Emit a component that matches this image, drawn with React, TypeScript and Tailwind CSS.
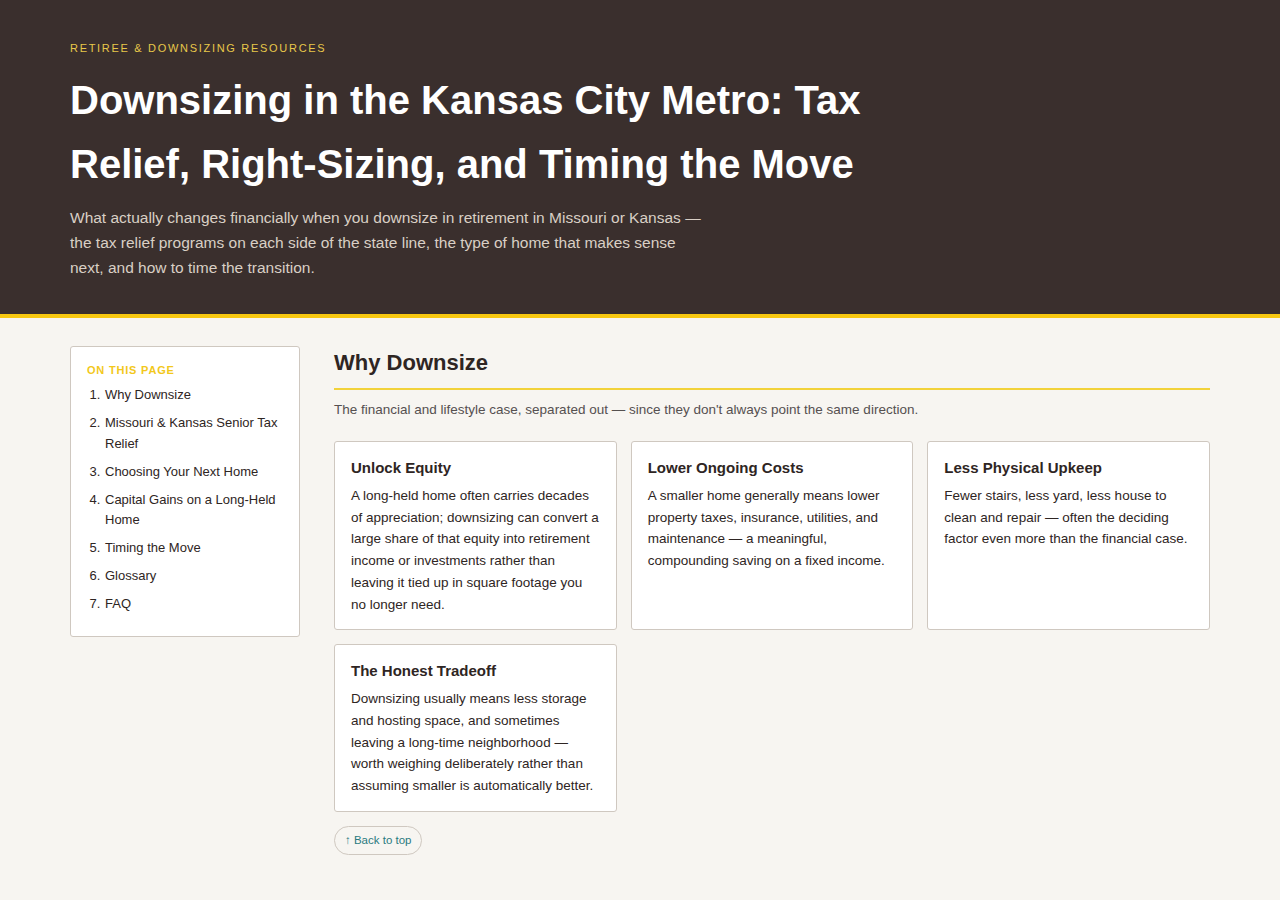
import React from 'react';

const toc = [
  'Why Downsize',
  'Missouri & Kansas Senior Tax Relief',
  'Choosing Your Next Home',
  'Capital Gains on a Long-Held Home',
  'Timing the Move',
  'Glossary',
  'FAQ',
];

const cards = [
  {
    title: 'Unlock Equity',
    body: 'A long-held home often carries decades of appreciation; downsizing can convert a large share of that equity into retirement income or investments rather than leaving it tied up in square footage you no longer need.',
  },
  {
    title: 'Lower Ongoing Costs',
    body: 'A smaller home generally means lower property taxes, insurance, utilities, and maintenance — a meaningful, compounding saving on a fixed income.',
  },
  {
    title: 'Less Physical Upkeep',
    body: 'Fewer stairs, less yard, less house to clean and repair — often the deciding factor even more than the financial case.',
  },
  {
    title: 'The Honest Tradeoff',
    body: 'Downsizing usually means less storage and hosting space, and sometimes leaving a long-time neighborhood — worth weighing deliberately rather than assuming smaller is automatically better.',
  },
];

export default function App() {
  return (
    <div className="min-h-[900px] bg-[#f7f5f1] font-['Liberation_Sans',Arial,sans-serif] text-[#2e2523]">
      <header className="bg-[#3a2f2d] border-b-4 border-[#f7c811]">
        <div className="px-[70px] pt-[41px] pb-[34px]">
          <p className="text-[11px] tracking-[1.7px] uppercase text-[#e8c84a] leading-[14px]">
            Retiree &amp; Downsizing Resources
          </p>
          <h1 className="mt-[13px] text-[40px] font-bold leading-[64px] text-white max-w-[830px]">
            Downsizing in the Kansas City Metro: Tax Relief, Right-Sizing, and Timing the Move
          </h1>
          <p className="mt-[9px] text-[15.5px] leading-[25px] text-[#d9cfc5] max-w-[640px]">
            What actually changes financially when you downsize in retirement in Missouri or Kansas — the tax relief programs on each side of the state line, the type of home that makes sense next, and how to time the transition.
          </p>
        </div>
      </header>

      <div className="px-[70px] pt-[28px] pb-[44px] flex gap-[34px] items-start">
        <aside className="w-[230px] shrink-0 bg-white border border-[#cfc8c0] rounded-[3px] px-[16px] pt-[16px] pb-[14px]">
          <p className="text-[11px] font-bold tracking-[0.8px] uppercase text-[#f2c81c] leading-[14px]">
            On this page
          </p>
          <ol className="mt-[8px] pl-[17px] list-decimal text-[13px] leading-[20.5px] text-[#2e2523]">
            {toc.map((t) => (
              <li key={t} className="pl-[1px] mb-[7.5px]">
                {t}
              </li>
            ))}
          </ol>
        </aside>

        <main className="flex-1">
          <h2 className="pt-[3px] text-[22px] font-bold leading-[28px] text-[#2e2523] pb-[11px] border-b-2 border-[#f2d23a]">
            Why Downsize
          </h2>
          <p className="mt-[11px] text-[13.5px] leading-[18px] text-[#555050]">
            The financial and lifestyle case, separated out — since they don't always point the same direction.
          </p>
          <div className="mt-[22px] grid grid-cols-3 gap-[14px]">
            {cards.map((c) => (
              <div key={c.title} className="bg-white border border-[#cfc8c0] rounded-[3px] px-[16px] pt-[16px] pb-[14px]">
                <h3 className="text-[15px] font-bold leading-[20px] text-[#2e2523]">{c.title}</h3>
                <p className="mt-[7px] text-[13.5px] leading-[21.7px] text-[#2e2523]">{c.body}</p>
              </div>
            ))}
          </div>
          <button className="mt-[14px] rounded-full border border-[#cfc8c0] px-[10px] py-[6px] text-[11.5px] leading-[15px] text-[#2a7a80]">
            ↑ Back to top
          </button>
        </main>
      </div>
    </div>
  );
}
